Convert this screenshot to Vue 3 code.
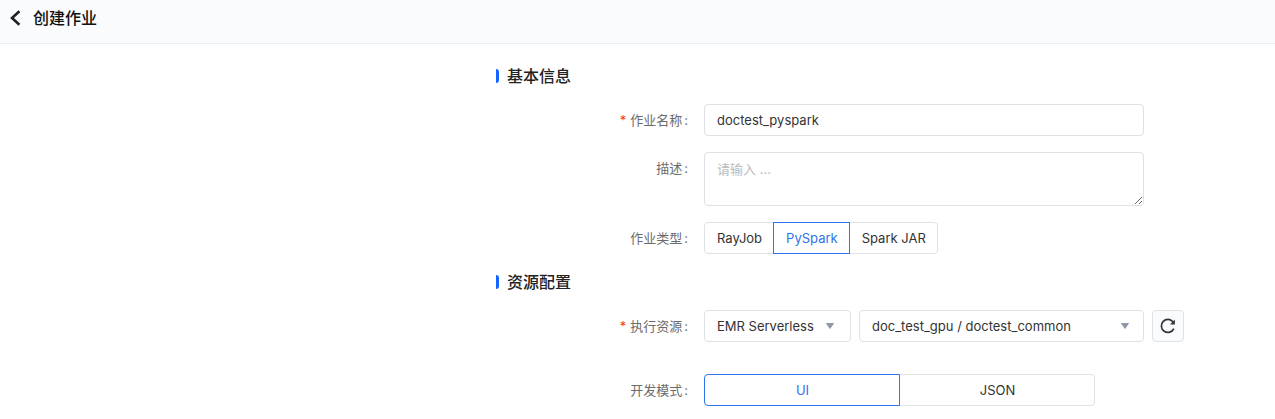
<script setup>
import { ref } from 'vue'

const name = ref('doctest_pyspark')
const description = ref('')
const jobTypes = ['RayJob', 'PySpark', 'Spark JAR']
const jobType = ref('PySpark')
const engine = ref('EMR Serverless')
const queue = ref('doc_test_gpu / doctest_common')
const modes = ['UI', 'JSON']
const mode = ref('UI')
</script>

<template>
  <div class="page">
    <header class="topbar">
      <button class="back" type="button" aria-label="返回">
        <svg width="11" height="16" viewBox="0 0 11 16" aria-hidden="true">
          <path d="M9.4 1.2 2 8l7.4 6.8" fill="none" stroke="currentColor" stroke-width="2.6" />
        </svg>
      </button>
      <h1>创建作业</h1>
    </header>

    <form class="form" @submit.prevent>
      <h2>基本信息</h2>
      <div class="row">
        <label class="label required" for="job-name">作业名称</label>
        <input id="job-name" v-model="name" class="box wide" type="text" />
      </div>
      <div class="row">
        <label class="label" for="job-desc">描述</label>
        <textarea id="job-desc" v-model="description" class="box wide area" placeholder="请输入 ..."></textarea>
      </div>
      <div class="row">
        <span id="type-label" class="label">作业类型</span>
        <div class="group" role="radiogroup" aria-labelledby="type-label">
          <label v-for="t in jobTypes" :key="t" class="option" :class="{ active: jobType === t }">
            <input v-model="jobType" type="radio" name="job-type" :value="t" />{{ t }}
          </label>
        </div>
      </div>

      <h2>资源配置</h2>
      <div class="row resource">
        <label class="label required" for="engine">执行资源</label>
        <div class="controls">
          <div class="select engine">
            <select id="engine" v-model="engine" class="box">
              <option>EMR Serverless</option>
            </select>
            <svg class="caret" width="10" height="8" viewBox="0 0 10 8" aria-hidden="true">
              <path d="M1.4 1h7.2q.7 0 .3.6L5.5 6.5q-.5.6-1 0L1.1 1.6Q.7 1 1.4 1z" />
            </svg>
          </div>
          <div class="select queue">
            <select v-model="queue" class="box" aria-label="队列">
              <option>doc_test_gpu / doctest_common</option>
            </select>
            <svg class="caret" width="10" height="8" viewBox="0 0 10 8" aria-hidden="true">
              <path d="M1.4 1h7.2q.7 0 .3.6L5.5 6.5q-.5.6-1 0L1.1 1.6Q.7 1 1.4 1z" />
            </svg>
          </div>
          <button class="refresh" type="button" aria-label="刷新">
            <svg width="16" height="16" viewBox="0 0 16 16" aria-hidden="true">
              <path d="M13.8 10.6A6.5 6.5 0 1 1 13.2 4.2" fill="none" stroke="currentColor" stroke-width="1.7" />
              <path d="M14.9 1.6v4.8h-4.8z" fill="currentColor" />
            </svg>
          </button>
        </div>
      </div>
      <div class="row">
        <span id="mode-label" class="label">开发模式</span>
        <div class="group modes" role="radiogroup" aria-labelledby="mode-label">
          <label v-for="m in modes" :key="m" class="option" :class="{ active: mode === m }">
            <input v-model="mode" type="radio" name="mode" :value="m" />{{ m }}
          </label>
        </div>
      </div>
    </form>
  </div>
</template>

<style>
body {
  background: #fff;
}
</style>

<style scoped>
.page,
.page input,
.page textarea,
.page select,
.page button {
  font-family: Inter, "Noto Sans CJK SC", sans-serif;
  font-size: 13px;
  line-height: 20px;
  color: #333;
}
.page * {
  box-sizing: border-box;
}
.topbar {
  display: flex;
  align-items: center;
  gap: 12px;
  height: 44px;
  padding: 0 10px 8px;
  background: #fafbfd;
  border-bottom: 1px solid #eaedf1;
}
.page .back {
  display: flex;
  padding: 0;
  border: 0;
  background: none;
  color: #222;
}
h1,
h2 {
  margin: 0;
  font-size: 16px;
  line-height: 24px;
  font-weight: 500;
}
h1 {
  color: #111;
}
.form {
  max-width: 688px;
  margin-left: 496px;
  padding: 20px 0 12px;
}
h2 {
  display: flex;
  align-items: center;
  gap: 8px;
  margin-bottom: 16px;
  color: #222;
}
h2::before {
  content: "";
  width: 3px;
  height: 14px;
  border-radius: 0 3px 3px 0;
  background: #1664ff;
}
.row {
  display: flex;
  align-items: flex-start;
  margin-bottom: 16px;
}
.resource {
  margin-bottom: 32px;
}
.label {
  flex: none;
  width: 208px;
  padding-right: 16px;
  line-height: 32px;
  text-align: right;
  color: #6b6b6b;
}
.label::after {
  content: ":";
  margin-left: 2px;
}
.required::before {
  content: "*";
  margin-right: 4px;
  color: #f5352c;
}
.box {
  height: 32px;
  padding: 0 12px;
  border: 1px solid #dfe1e7;
  border-radius: 4px;
  background: #fff;
  outline: none;
}
.wide {
  flex: 1;
  min-width: 0;
  margin-right: 40px;
}
.area {
  display: block;
  height: 54px;
  padding: 6px 12px;
  resize: vertical;
}
.area::placeholder {
  color: #bbb;
  opacity: 1;
}
.group {
  display: flex;
}
.option {
  position: relative;
  height: 32px;
  margin-left: -1px;
  padding: 0 11px 0 12px;
  border: 1px solid #dfe1e7;
  line-height: 30px;
  text-align: center;
  white-space: nowrap;
  background: #fff;
}
.option:first-child {
  margin-left: 0;
  border-radius: 4px 0 0 4px;
}
.option:last-child {
  border-radius: 0 4px 4px 0;
}
.option.active {
  z-index: 1;
  border-color: #2f73ee;
  color: #2f73ee;
}
.option input {
  position: absolute;
  inset: 0;
  margin: 0;
  opacity: 0;
}
.modes {
  flex: 1;
  max-width: 391px;
}
.modes .option {
  flex: 1;
}
.controls {
  display: flex;
  flex: 1;
  gap: 8px;
}
.select {
  position: relative;
}
.select select {
  width: 100%;
  appearance: none;
}
.engine {
  width: 147px;
}
.queue {
  flex: 1;
}
.caret {
  position: absolute;
  top: 12px;
  right: 16px;
  fill: #8f99a6;
  pointer-events: none;
}
.queue .caret {
  right: 14px;
}
.refresh {
  display: flex;
  align-items: center;
  justify-content: center;
  width: 32px;
  height: 32px;
  padding: 0;
  border: 1px solid #dfe1e7;
  border-radius: 4px;
  background: #fafbfd;
}
</style>
